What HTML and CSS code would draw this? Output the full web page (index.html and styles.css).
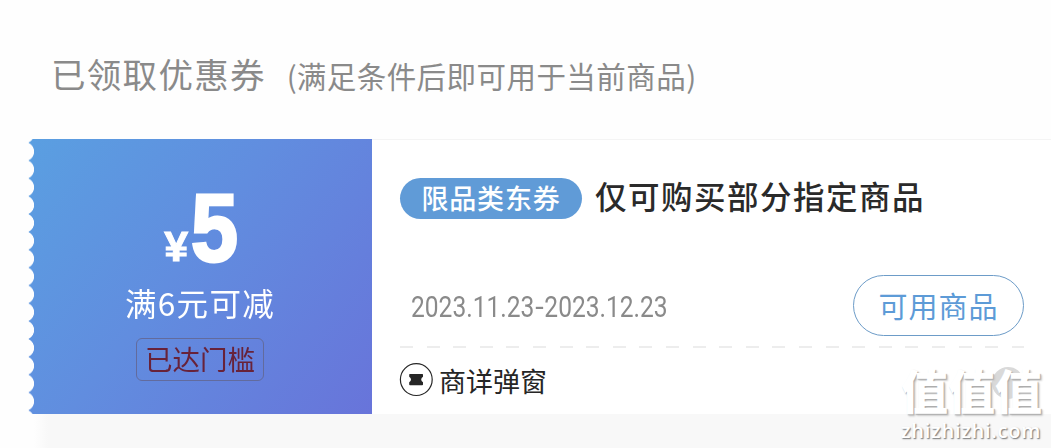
FILE: index.html
```html
<!DOCTYPE html>
<html lang="zh-CN">
<head>
<meta charset="utf-8">
<title>已领取优惠券</title>
<link rel="stylesheet" href="styles.css">
</head>
<body>
<main class="page">
  <header class="heading">
    <h1 class="heading-title">已领取优惠券</h1>
    <span class="heading-note"><span class="paren">(</span>满足条件后即可用于当前商品<span class="paren">)</span></span>
  </header>
  <section class="coupon">
    <div class="value">
      <div class="amount"><span class="currency">¥</span><span class="number">5</span></div>
      <div class="condition">满6元可减</div>
      <div class="reached">已达门槛</div>
    </div>
    <div class="info">
      <div class="title-row">
        <span class="tag">限品类东券</span>
        <span class="title">仅可购买部分指定商品</span>
      </div>
      <div class="date-row">
        <span class="date">2023.11.23<span class="dash">-</span>2023.12.23</span>
        <a class="button">可用商品</a>
      </div>
      <div class="divider"></div>
      <div class="source">
        <svg class="source-icon" viewBox="0 0 34 34" width="34" height="34">
          <circle cx="17.3" cy="16.6" r="15.9" fill="none" stroke="#262626" stroke-width="1.2"/>
          <path d="M10.9 10.9h12.4q.7 0 .7.7v2.1q-1.8 1.3-1.8 2.8t1.8 2.8v2.1q0 .8-.8.8H11q-.8 0-.8-.8v-2.1q1.8-1.3 1.8-2.8t-1.8-2.8v-2.1q0-.7.7-.7z" fill="#262626"/>
        </svg>
        <span class="source-name">商详弹窗</span>
      </div>
    </div>
  </section>
  <div class="below"></div>
  <div class="watermark">
    <span class="info-dot"></span>
    <span class="mark-name">值值值</span>
    <span class="mark-url">zhizhizhi.com</span>
  </div>
</main>
</body>
</html>
```
FILE: styles.css
```css
* { box-sizing: border-box; }
body {
  margin: 0;
  background: #fff;
  font-family: "Noto Sans CJK SC", sans-serif;
  white-space: nowrap;
}
.page {
  position: relative;
  display: flex;
  flex-direction: column;
  width: 1051px;
  height: 448px;
  overflow: hidden;
  background: #fefefe;
}
.heading {
  display: flex;
  align-items: baseline;
  gap: 21px;
  height: 139px;
  padding: 48px 0 0 51px;
  color: #8a8a8a;
}
.heading-title {
  margin: 0;
  font-size: 34.5px;
  line-height: 50px;
  font-weight: 400;
  letter-spacing: 1.3px;
}
.heading-note {
  font-size: 29.5px;
  line-height: 50px;
  font-weight: 400;
  letter-spacing: .45px;
}
.paren { letter-spacing: 0; }
.coupon {
  display: flex;
  height: 275px;
  padding-left: 28px;
}
.value {
  display: flex;
  flex-direction: column;
  align-items: center;
  width: 344px;
  padding-top: 41px;
  color: #fff;
  background: linear-gradient(127deg, #5a9fe1 0%, #618ddf 45%, #6874da 100%);
  -webkit-mask: radial-gradient(circle at -3.6px 50%, transparent 9.3px, #000 10px) 0 3.7px / 100% 17.85px repeat-y;
  mask: radial-gradient(circle at -3.6px 50%, transparent 9.3px, #000 10px) 0 3.7px / 100% 17.85px repeat-y;
}
.amount {
  display: flex;
  align-items: baseline;
  gap: 3px;
  height: 97px;
  padding-left: 9px;
  font-family: "Liberation Sans", Arial, sans-serif;
  font-weight: 700;
  line-height: 96px;
}
.currency {
  font-size: 43px;
  -webkit-text-stroke: 1px #fff;
}
.number {
  font-size: 96px;
  transform: scaleX(.88);
  transform-origin: left center;
  -webkit-text-stroke: 3px #fff;
}
.condition {
  height: 52px;
  font-size: 31.5px;
  line-height: 50px;
  letter-spacing: 1.3px;
}
.reached {
  width: 128px;
  height: 43px;
  margin-top: 9px;
  border: 1px solid #626b9d;
  border-radius: 6px;
  color: #682239;
  font-size: 27.5px;
  line-height: 39px;
  text-align: center;
}
.info {
  display: flex;
  flex-direction: column;
  flex: 1;
  padding: 37px 27px 0 28px;
  border-top: 1px solid #f4f4f4;
  background: #fff;
}
.title-row {
  display: flex;
  align-items: center;
  gap: 13px;
  height: 42px;
}
.tag {
  width: 182px;
  height: 41px;
  border-radius: 21px;
  background: #609bd7;
  color: #fff;
  font-size: 27px;
  line-height: 39px;
  font-weight: 500;
  letter-spacing: .8px;
  text-align: center;
}
.title {
  padding-bottom: 5px;
  color: #2a2a2a;
  font-size: 31.5px;
  line-height: 37px;
  font-weight: 500;
  letter-spacing: 1.5px;
}
.date-row {
  display: flex;
  align-items: center;
  justify-content: space-between;
  height: 61px;
  margin-top: 56px;
  padding-left: 11px;
}
.date {
  padding-top: 2px;
  color: #8a8a8a;
  font-family: Roboto, sans-serif;
  font-size: 30px;
  font-weight: 400;
  transform: scaleX(.818);
  transform-origin: left center;
}
.dash {
  display: inline-block;
  padding: 0 2px;
  transform: scaleX(1.25);
}
.button {
  width: 171px;
  height: 61px;
  border: 1px solid #6d9cc8;
  border-radius: 31px;
  color: #5d9bd7;
  font-size: 29px;
  line-height: 58px;
  letter-spacing: 1px;
  text-align: center;
}
.divider {
  height: 2px;
  margin-top: 10px;
  background: repeating-linear-gradient(90deg, #ededed 0 13px, transparent 13px 26.6px);
}
.source {
  display: flex;
  align-items: center;
  gap: 6px;
  height: 34px;
  margin-top: 15px;
}
.source-icon { display: block; margin-left: -1px; }
.source-name {
  padding-top: 1px;
  color: #262626;
  font-size: 27px;
  line-height: 33px;
}
.below {
  flex: 1;
  margin-left: 34px;
  background: linear-gradient(90deg, #fefefe, #f8f8f8 14px);
}
/* Overlay on the coupon's bottom corner */
.watermark {
  position: absolute;
  top: 366px;
  left: 901px;
  display: flex;
  flex-direction: column;
  color: #fff;
}
.info-dot {
  position: absolute;
  top: 1px;
  left: 91px;
  width: 32px;
  height: 32px;
  border-radius: 50%;
  background: #d9d9d9;
}
.mark-name {
  position: relative;
  height: 53px;
  font-size: 47px;
  line-height: 46px;
  font-weight: 900;
  text-shadow: 1px 1px 1px #aaa, 2px 2px 2px #ccc;
}
.mark-url {
  font-family: "Open Sans", sans-serif;
  font-size: 20px;
  line-height: 24px;
  font-weight: 600;
  letter-spacing: .75px;
  text-shadow: 1px 1px 1px #888, 1px 1px 2px #bbb;
}
```
